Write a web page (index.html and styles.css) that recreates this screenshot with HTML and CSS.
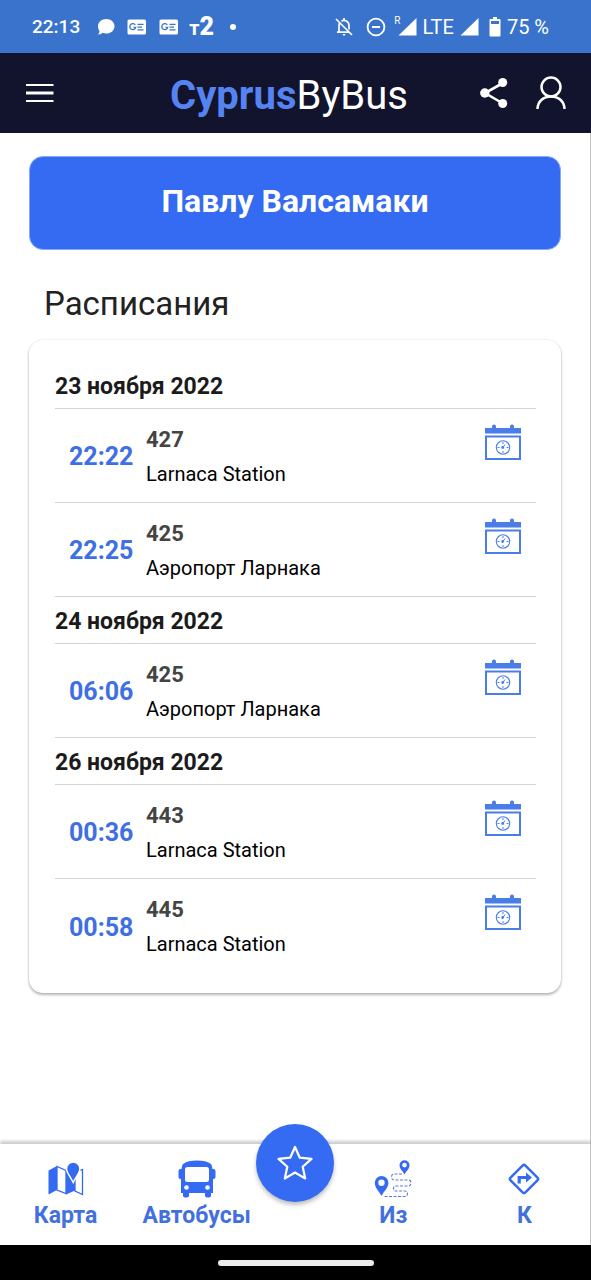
FILE: index.html
```
<!DOCTYPE html>
<html lang="ru">
<head>
<meta charset="utf-8">
<meta name="viewport" content="width=device-width, initial-scale=1">
<title>CyprusByBus</title>
<link rel="stylesheet" href="styles.css">
</head>
<body>
<svg class="defs" width="0" height="0" aria-hidden="true">
  <symbol id="calendar" viewBox="0 0 36 36">
    <path d="M0 4h7V2.500a2 2 0 0 1 4 0V4h14V2.500a2 2 0 0 1 4 0V4h7v5.500H0z" fill="#4a7de8"/>
    <rect x="1" y="12.500" width="34" height="22.500" fill="none" stroke="#4a7de8" stroke-width="2"/>
    <circle cx="18" cy="23.500" r="6.700" fill="none" stroke="#4a7de8" stroke-width="1.100"/>
    <path d="M18 18v2M18 27v2M12.500 23.500h2M21.500 23.500h2M18 23.500l2-3" fill="none" stroke="#4a7de8" stroke-width="1"/>
    <circle cx="17.700" cy="23.500" r="1.400" fill="#4a7de8"/>
  </symbol>
  <symbol id="news" viewBox="0 0 20 16">
    <rect x=".5" y=".5" width="18.500" height="15" rx="1.500" fill="#fff"/>
    <path d="M8.300 6A3 3 0 1 0 8.700 8.300H6.500M10.500 5.300h6M10.500 8.200h4.500M10.500 10.900h6" fill="none" stroke="#3973cb" stroke-width="1.300"/>
  </symbol>
</svg>
<div class="app">
  <div class="status">
    <div class="status-group">
      <span class="clock">22:13</span>
      <svg width="18" height="18" viewBox="0 0 18 18"><path d="M9.300 1c4.700 0 8.200 3.200 8.200 7.200s-3.500 7.300-8.200 7.300c-1.400 0-2.700-.2-3.800-.7C4.500 15.800 3 16.600 1 16.500c1-1 1.600-2.200 1.500-3.500C1.500 11.700 1 10 1 8.200 1 4.200 4.600 1 9.300 1z" fill="#fff"/></svg>
      <svg width="20" height="16"><use href="#news"/></svg>
      <svg width="20" height="16"><use href="#news"/></svg>
      <span class="operator"><span class="operator-t">т</span>2</span>
      <span class="dot"></span>
    </div>
    <div class="status-group status-right">
      <svg class="bell" width="20" height="20" viewBox="0 0 20 20" fill="none" stroke="#fff" stroke-width="1.700"><path d="M2 2l16 16M3 15.200h11.500M5 15V8.500c0-1.200.3-2 .8-2.800M7.500 4.200C10.500 2 15 4.500 15 8.500v4M10 1v2.500"/><path d="M8.300 17h3.400L10 19z" fill="#fff" stroke="none"/></svg>
      <svg class="dnd" width="20" height="20" viewBox="0 0 20 20" fill="none" stroke="#fff"><circle cx="10" cy="10" r="8.400" stroke-width="1.800"/><path d="M6 10h8" stroke-width="2"/></svg>
      <span class="roaming">R</span>
      <svg width="19" height="18" viewBox="0 0 19 18"><path d="M18.500 0v17.500H.5z" fill="#fff"/></svg>
      <span class="network">LTE</span>
      <svg width="19" height="18" viewBox="0 0 19 18"><path d="M18.500 0v17.500H.5z" fill="#fff"/></svg>
      <svg class="battery" width="12" height="20" viewBox="0 0 12 20"><path d="M4 0h4v2h2.500q1 0 1 1v15.500q0 1-1 1h-9q-1 0-1-1V3q0-1 1-1H4z" fill="#fff"/><path d="M2 4h8v3H2z" fill="#3973cb"/></svg>
      <span>75 %</span>
    </div>
  </div>

  <header class="header">
    <button class="icon-btn" aria-label="Меню">
      <svg width="28" height="20" viewBox="0 0 28 20" stroke="#fff"><path d="M0 2h27.500M0 18h27.500" stroke-width="2.200"/><path d="M0 10h27.500" stroke-width="3"/></svg>
    </button>
    <h1 class="brand"><span class="brand-accent">Cyprus</span>ByBus</h1>
    <div class="actions">
      <button class="icon-btn" aria-label="Поделиться">
        <svg width="28" height="32" viewBox="0 0 28 32" fill="#fff"><path d="M23 6L5 16l18 10.500" fill="none" stroke="#fff" stroke-width="2.600"/><circle cx="22.700" cy="5.500" r="4.500"/><circle cx="4.800" cy="16" r="4.700"/><circle cx="22.700" cy="26.500" r="4.500"/></svg>
      </button>
      <button class="icon-btn" aria-label="Профиль">
        <svg width="30" height="34" viewBox="0 0 30 34" fill="none" stroke="#fff" stroke-width="2.500"><circle cx="15" cy="11" r="9.500"/><path d="M1.500 33c.3-8 6-12.500 13.500-12.500S28.200 25 28.500 33"/></svg>
      </button>
    </div>
  </header>

  <main class="main">
    <button class="stop">Павлу Валсамаки</button>
    <h2 class="title">Расписания</h2>
    <section class="card">
      <h3 class="date">23 ноября 2022</h3>
      <div class="trip"><time class="time">22:22</time><div class="info"><b class="route">427</b><span>Larnaca Station</span></div><button class="icon-btn trip-btn" aria-label="Расписание 427"><svg width="36" height="36"><use href="#calendar"/></svg></button></div>
      <div class="trip"><time class="time">22:25</time><div class="info"><b class="route">425</b><span>Аэропорт Ларнака</span></div><button class="icon-btn trip-btn" aria-label="Расписание 425"><svg width="36" height="36"><use href="#calendar"/></svg></button></div>
      <h3 class="date">24 ноября 2022</h3>
      <div class="trip"><time class="time">06:06</time><div class="info"><b class="route">425</b><span>Аэропорт Ларнака</span></div><button class="icon-btn trip-btn" aria-label="Расписание 425"><svg width="36" height="36"><use href="#calendar"/></svg></button></div>
      <h3 class="date">26 ноября 2022</h3>
      <div class="trip"><time class="time">00:36</time><div class="info"><b class="route">443</b><span>Larnaca Station</span></div><button class="icon-btn trip-btn" aria-label="Расписание 443"><svg width="36" height="36"><use href="#calendar"/></svg></button></div>
      <div class="trip"><time class="time">00:58</time><div class="info"><b class="route">445</b><span>Larnaca Station</span></div><button class="icon-btn trip-btn" aria-label="Расписание 445"><svg width="36" height="36"><use href="#calendar"/></svg></button></div>
    </section>
  </main>

  <nav class="nav">
    <a class="tab" href="#map">
      <svg width="38" height="38" viewBox="0 0 38 38" fill="#346bf2"><path d="M1.500 10.500L10 6v24L1.500 34.500zM19 9.500l3.500-1.700L27 18l1 1v11.500L19 34.500z"/><path d="M10 6.500l9 4v23l-9-3.500zM28 31V18l3-7.500 4.500-1v25z" fill="#fff" stroke="#346bf2" stroke-width="1.300"/><path d="M26.200 22.500C23 16 19.500 12.500 19.500 8.700a6.700 6.700 0 0 1 13.400 0c0 3.800-3.500 7.300-6.700 13.800z" stroke="#fff" stroke-width="1.500"/></svg>
      <span>Карта</span>
    </a>
    <a class="tab" href="#buses">
      <svg width="38" height="38" viewBox="0 0 38 38" fill="#346bf2"><path d="M5 4C8 1.500 13 .5 19 .5S30 1.500 33 4c.8 1 1.300 3 1.400 5h1.100q2 0 2 2v6q0 2-2 2H35v14h-2v2.500q0 2-3 2t-3-2V33H11v2.500q0 2-3 2t-3-2V33H3V19h-.5q-2 0-2-2v-6q0-2 2-2h1.100C3.700 7 4.200 5 5 4z"/><rect x="7" y="7" width="24" height="15" rx="2.500" fill="#fff"/><circle cx="8.500" cy="27.500" r="2.300" fill="#fff"/><circle cx="29.500" cy="27.500" r="2.300" fill="#fff"/></svg>
      <span>Автобусы</span>
    </a>
    <a class="favorite" href="#favorites" aria-label="Избранное">
      <svg width="36" height="36" viewBox="0 0 36 36" fill="none" stroke="#fff" stroke-width="2.200" stroke-linejoin="round"><path d="M18 2l4.800 10.700 11.700 1.200-8.800 7.900 2.500 11.700L18 27.500 7.800 33.500l2.500-11.700-8.800-7.900 11.700-1.200z"/></svg>
    </a>
    <a class="tab" href="#from">
      <svg width="38" height="38" viewBox="0 0 38 38" fill="#346bf2"><path fill-rule="evenodd" d="M7.500 36C5 31 .8 28 .8 22.800a6.800 6.800 0 0 1 13.600 0C14.400 28 10 31 7.500 36zm0-16.500a3.200 3.200 0 1 0 0 6.400 3.200 3.200 0 0 0 0-6.400zM30.500 14.500c-1.700-3.700-5-5.500-5-9.300a5 5 0 0 1 10 0c0 3.800-3.300 5.600-5 9.300zm0-11.700a2.300 2.300 0 1 0 0 4.600 2.300 2.300 0 0 0 0-4.600z"/><path d="M28 14h-7.500q-3 0-3 3t3 3H34q3 0 3 3t-3 3H22q-2.500 0-2.500 2.500T22 31h9q2.500 0 2.500 2.500T31 36.500H9" fill="none" stroke="#5a78d8" stroke-width="1.100" stroke-dasharray="3 1.500"/></svg>
      <span>Из</span>
    </a>
    <a class="tab" href="#to">
      <svg width="38" height="38" viewBox="0 0 38 38" fill="none" stroke="#346bf2"><rect x="8.500" y="8.500" width="21" height="21" rx="2" transform="rotate(45 19 19)" stroke-width="2.500"/><path d="M14.200 23.500v-6H22" stroke-width="3.200"/><path d="M21 12.500l6 5-6 5z" fill="#346bf2" stroke="none"/></svg>
      <span>К</span>
    </a>
  </nav>
  <div class="gesture"><span class="gesture-bar"></span></div>
</div>
</body>
</html>
```
FILE: styles.css
```
* { box-sizing: border-box; }

body {
  margin: 0;
  font-family: Roboto, "Liberation Sans", sans-serif;
  color: #000;
  background: #fff;
}

h1, h2, h3 { margin: 0; }
svg { display: block; flex: none; }
.defs { position: absolute; }

.app {
  min-height: 100vh;
  display: flex;
  flex-direction: column;
}

.status {
  height: 53px;
  padding: 0 42px 0 32px;
  display: flex;
  align-items: center;
  justify-content: space-between;
  background: #3973cb;
  color: #fff;
  font-size: 20px;
}

.status-group {
  display: flex;
  align-items: center;
  gap: 12px;
}

.status-right { gap: 6px; }

.clock {
  margin-right: 5px;
  font-size: 19px;
  font-weight: 500;
}

.operator {
  margin-left: -2px;
  padding-top: 1px;
  font-size: 25px;
  font-weight: 900;
  line-height: 24px;
}

.operator-t {
  font-size: 20px;
  font-weight: 700;
}

.dot {
  width: 6px;
  height: 6px;
  margin-left: 4px;
  border-radius: 50%;
  background: #fff;
}

.bell { margin-right: 6px; }
.dnd { margin-right: 2px; }

.roaming {
  align-self: flex-start;
  margin-right: -9px;
  font-size: 10px;
}

.battery { margin-left: 4px; }

.header {
  height: 80px;
  padding: 0 25px 0 26px;
  display: grid;
  grid-template-columns: 1fr auto 1fr;
  align-items: center;
  background: #12132c;
  color: #fff;
}

.icon-btn {
  display: block;
  padding: 0;
  border: 0;
  background: none;
  justify-self: start;
  cursor: pointer;
}

.brand {
  padding: 6px 14px 0 0;
  font-size: 40px;
  font-weight: 400;
  line-height: 48px;
}

.brand-accent {
  color: #5583f1;
  font-weight: 700;
}

.actions {
  display: flex;
  align-items: center;
  justify-content: flex-end;
  gap: 28px;
}

.main {
  flex: 1;
  padding: 23px 29px;
  border-right: 1px solid #c4c4c4;
}

.stop {
  display: block;
  width: 100%;
  height: 94px;
  padding: 0 0 4px;
  border: 1px solid #86aaf7;
  border-radius: 14px;
  background: #346bf2;
  color: #fff;
  font: 700 32px/40px Roboto, sans-serif;
}

.title {
  margin: 32px 15px 14px;
  color: #222;
  font-size: 33px;
  font-weight: 400;
  line-height: 44px;
}

.card {
  padding: 22px 25px 20px 26px;
  border-radius: 14px;
  box-shadow: 0 2px 3px rgba(0, 0, 0, .28), 0 0 2px rgba(0, 0, 0, .14);
}

.date {
  height: 47px;
  border-bottom: 1px solid #d4d4d4;
  color: #1b1b1b;
  font-size: 23px;
  font-weight: 700;
  line-height: 49px;
}

.trip {
  height: 94px;
  padding: 2px 15px 0 14px;
  display: flex;
  align-items: center;
  border-bottom: 1px solid #d4d4d4;
}

.trip:last-child { border-bottom: 0; }

.time {
  width: 77px;
  color: #3f6fe4;
  font-size: 25px;
  font-weight: 700;
}

.info {
  flex: 1;
  display: flex;
  flex-direction: column;
  font-size: 20px;
  line-height: 35px;
}

.route {
  color: #444;
  font-size: 22px;
}

.trip-btn {
  align-self: flex-start;
  margin-top: 13px;
}

.nav {
  height: 101px;
  display: grid;
  grid-template-columns: minmax(0, 2fr) minmax(0, 2fr) minmax(0, 1fr) minmax(0, 2fr) minmax(0, 2fr);
  border-right: 1px solid #c4c4c4;
  background: #fff;
  box-shadow: 0 -3px 3px rgba(0, 0, 0, .2);
}

.tab {
  padding-top: 16px;
  display: flex;
  flex-direction: column;
  align-items: center;
  color: #4370df;
  font-size: 23px;
  font-weight: 700;
  line-height: 35px;
  text-decoration: none;
}

.favorite {
  width: 78px;
  height: 78px;
  margin-top: -20px;
  justify-self: center;
  display: grid;
  place-items: center;
  border-radius: 50%;
  background: #346bf2;
  box-shadow: 0 3px 4px rgba(0, 0, 0, .25);
}

.gesture {
  height: 35px;
  display: grid;
  place-items: center;
  background: #000;
}

.gesture-bar {
  width: 156px;
  height: 6px;
  border-radius: 3px;
  background: #ececec;
}
```
